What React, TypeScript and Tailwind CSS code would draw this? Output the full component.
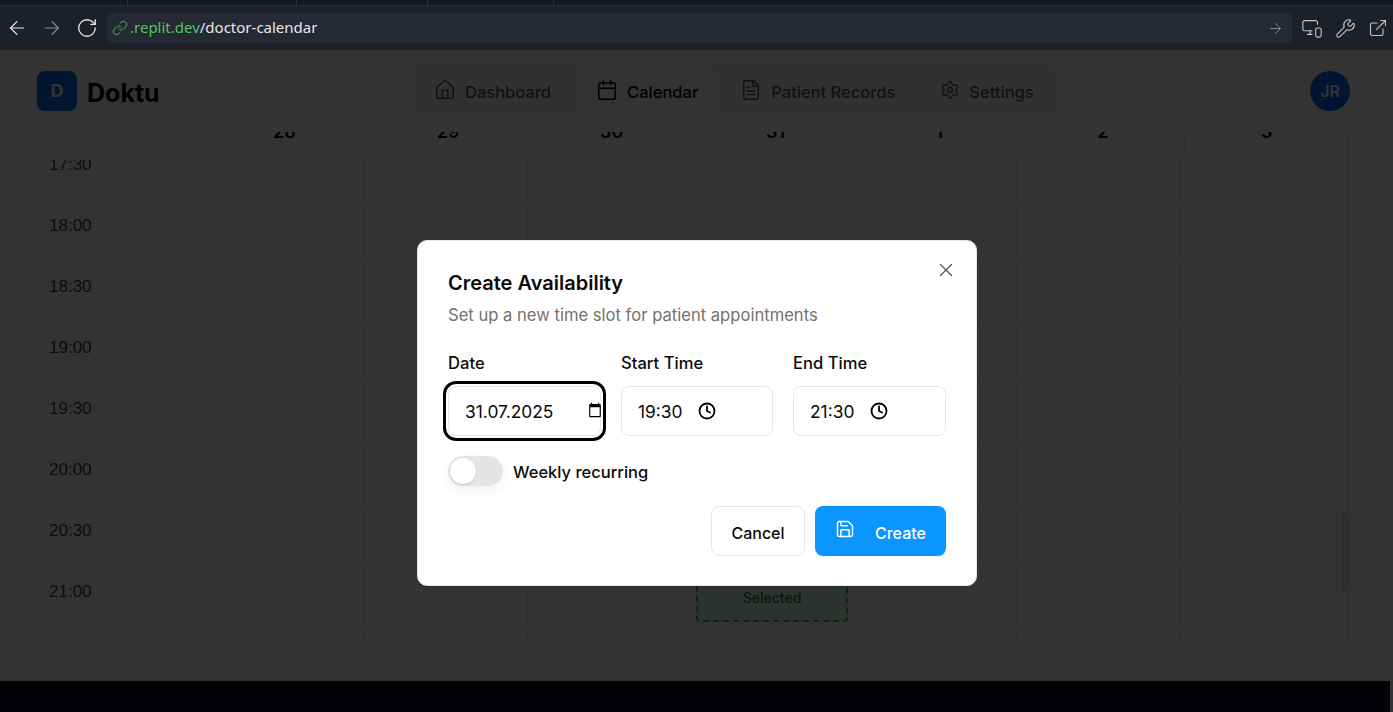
import React from "react";
import {
  ArrowLeft,
  ArrowRight,
  Calendar,
  Clock,
  ExternalLink,
  FileText,
  Home,
  Link as LinkIcon,
  MonitorSmartphone,
  RotateCw,
  Save,
  Settings,
  Wrench,
  X,
} from "lucide-react";

const days = ["28", "29", "30", "31", "1", "2", "3"];
const times = ["17:30", "18:00", "18:30", "19:00", "19:30", "20:00", "20:30", "21:00", "21:30"];

const navItems = [
  { label: "Dashboard", icon: Home, size: 22, className: "pl-[18px] pr-[20px] text-[#4b5563]" },
  { label: "Calendar", icon: Calendar, size: 22, className: "pl-[19px] pr-[20px] ml-[6px] mr-[5px] rounded-[10px] bg-white text-black" },
  { label: "Patient Records", icon: FileText, size: 22, className: "pl-[17px] pr-[20px] mr-[7px] text-[#4b5563]" },
  { label: "Settings", icon: Settings, size: 20, className: "pl-[18px] pr-[20px] text-[#4b5563]" },
];

const BrowserBar = () => (
  <div className="h-[50px] shrink-0 bg-[#1c202b] flex flex-col">
    <div className="h-[6px] bg-[#161722] border-b border-[#2c2f3e] flex pl-[127px]">
      <div className="w-[169px] border-l border-[#2c2f3e]" />
      <div className="w-[131px] border-l border-[#2c2f3e]" />
      <div className="w-[127px] border-l border-[#2c2f3e] border-r" />
    </div>
    <div className="flex items-center h-[30px] mt-[7px]">
      <div className="flex items-center w-[107px] pl-[6px] text-[#e8eaed]">
        <ArrowLeft size={22} strokeWidth={1.3} />
        <ArrowRight size={22} strokeWidth={1.3} className="ml-[13px] text-[#8b8e98]" />
        <RotateCw size={22} strokeWidth={1.4} className="ml-[13px]" />
      </div>
      <div className="w-[1185px] h-[30px] rounded-[4px] bg-[#252933] flex items-center pl-[5px] pr-[8px] font-['Noto_Sans',sans-serif] text-[15px] leading-[20px]">
        <LinkIcon size={16} strokeWidth={1.5} className="text-[#4fb35f] shrink-0" />
        <span className="ml-[2px] -mt-[2px] text-[#57c26a]">.replit.dev</span>
        <span className="-mt-[2px] text-[#e4e7ee]">/doctor-calendar</span>
        <ArrowRight size={17} strokeWidth={1.2} className="ml-auto text-[#9a9da6]" />
      </div>
      <div className="flex items-center pl-[9px] gap-[12px] text-[#c4c6cc]">
        <MonitorSmartphone size={22} strokeWidth={1.2} />
        <Wrench size={21} strokeWidth={1.2} />
        <ExternalLink size={20} strokeWidth={1.3} />
      </div>
    </div>
  </div>
);

const TopNav = () => (
  <div className="h-[82px] flex items-center pl-[37px] pr-[43px] bg-white">
    <div className="w-10 h-10 rounded-[8px] bg-[#0566f0] text-white font-bold text-lg flex items-center justify-center">
      D
    </div>
    <div className="ml-[10px] w-[72px] pt-[6px] text-[25px] font-bold text-black">Doktu</div>
    <div className="ml-[251px] w-[648px] h-[54px] rounded-[12px] bg-[#f3f4f6] flex items-center pl-[6px] text-[16.5px] font-medium">
      {navItems.map((item) => {
        const Icon = item.icon;
        return (
          <div key={item.label} className={`h-[46px] flex items-center gap-[9px] whitespace-nowrap ${item.className}`}>
            <Icon size={item.size} strokeWidth={1.7} className="shrink-0 -mt-[2px]" />
            <span className="pt-[3px]">{item.label}</span>
          </div>
        );
      })}
    </div>
    <div className="ml-auto w-10 h-10 rounded-full bg-[#0566f0] text-white font-semibold flex items-center justify-center">
      JR
    </div>
  </div>
);

const CalendarGrid = () => (
  <div className="ml-[37px] w-[1312px] h-[509px] overflow-hidden relative border-r border-b border-[#e5e7eb]">
    <div className="grid grid-cols-[165px_repeat(7,1fr)] h-[28px] border-b border-[#e5e7eb] overflow-hidden">
      <div className="border-l border-[#e5e7eb]" />
      {days.map((d) => (
        <div key={d} className="border-l border-[#e5e7eb] text-center text-lg font-semibold text-black leading-[18px] -mt-[9px]">
          {d}
        </div>
      ))}
    </div>
    <div className="h-[480px] overflow-hidden w-[1305px]">
      <div className="-mt-[20px]">
        {times.map((t) => (
          <div key={t} className="grid grid-cols-[164px_repeat(7,163px)] h-[61px] border-b border-[#e5e7eb]">
            <div className="pl-[11px] pt-[12px] text-[17px] text-[#374151] font-['Liberation_Sans',sans-serif] border-l border-[#e5e7eb]">
              {t}
            </div>
            {days.map((d) => (
              <div key={d} className="border-l border-[#e5e7eb] p-[5px]">
                {t === "21:00" && d === "31" && (
                  <div className="h-[50px] pt-[2px] rounded-[4px] border-2 border-dashed border-[#22c55e] bg-[#dcfce7] text-sm font-medium text-[#15803d] flex items-center justify-center">
                    Selected
                  </div>
                )}
              </div>
            ))}
          </div>
        ))}
      </div>
    </div>
    <div className="absolute right-0 top-[381px] h-[79px] w-[7px] rounded bg-[#e0e0e0]" />
  </div>
);

const Field = ({ label, children, focused }: { label: string; children: React.ReactNode; focused?: boolean }) => (
  <div className="flex flex-col">
    <div className="text-[16.6px] font-medium text-[#0c0a09] leading-[24px] mb-[11px]">{label}</div>
    <div
      className={
        focused
          ? "h-[50px] rounded-[8px] border border-[#e7e5e4] bg-white flex items-center pl-[16px] text-[17.4px] text-[#0c0a09] outline-[3px] outline-offset-[2px] outline-black"
          : "h-[50px] rounded-[8px] border border-[#e7e5e4] bg-white flex items-center pl-[16px] text-[17.4px] text-[#0c0a09]"
      }
    >
      {children}
    </div>
  </div>
);

const Dialog = () => (
  <div className="absolute left-[417px] top-[240px] w-[560px] h-[346px] rounded-[10px] border border-[#e7e5e4] bg-white pt-[28px] px-[30px]">
    <X size={22} strokeWidth={1.4} className="absolute right-[19px] top-[18px] text-[#57534e]" />
    <div className="text-[20px] font-semibold leading-[28px] text-[#0c0a09]">Create Availability</div>
    <div className="text-[16.6px] leading-[24px] mt-[6px] text-[#78716c]">Set up a new time slot for patient appointments</div>
    <div className="grid grid-cols-[153px_152px_153px] gap-x-[20px] mt-[24px]">
      <Field label="Date" focused>
        <span className="pt-[3px]">31.07.2025</span>
        <svg
          width="14"
          height="16"
          viewBox="0 0 24 24"
          preserveAspectRatio="none"
          fill="currentColor"
          className="ml-auto -mr-[2px] -mt-[2px] text-black"
        >
          <path d="M20 3h-1V1h-2v2H7V1H5v2H4c-1.1 0-2 .9-2 2v16c0 1.1.9 2 2 2h16c1.1 0 2-.9 2-2V5c0-1.1-.9-2-2-2zm0 18H4V8h16v13z" />
        </svg>
      </Field>
      <Field label="Start Time">
        <span className="pt-[3px]">19:30</span>
        <Clock size={18} strokeWidth={2.4} className="ml-[15px] text-black" />
      </Field>
      <Field label="End Time">
        <span className="pt-[3px]">21:30</span>
        <Clock size={18} strokeWidth={2.4} className="ml-[16px] text-black" />
      </Field>
    </div>
    <div className="flex items-center mt-[20px] gap-[10px]">
      <div className="w-[55px] h-[30px] rounded-full bg-[#e7e5e4] p-[2px] shadow-[0_4px_12px_rgba(0,0,0,0.06)]">
        <div className="w-[26px] h-[26px] rounded-full bg-white shadow-sm" />
      </div>
      <div className="pt-[2px] text-[16.5px] font-medium text-[#0c0a09]">Weekly recurring</div>
    </div>
    <div className="flex justify-end gap-[10px] mt-[20px] text-base font-medium">
      <div className="w-[94px] h-[50px] pt-[3px] rounded-[8px] border border-[#e7e5e4] bg-white text-[#0c0a09] flex items-center justify-center">
        Cancel
      </div>
      <div className="w-[131px] h-[50px] rounded-[8px] bg-[#0a95ff] text-white flex items-center pl-[20px] gap-[20px]">
        <Save size={20} strokeWidth={1.8} className="-mt-[4px]" />
        <span className="pt-[3px]">Create</span>
      </div>
    </div>
  </div>
);

export default function App() {
  return (
    <div className="relative w-[1393px] h-[712px] overflow-hidden flex flex-col bg-white font-['Inter',sans-serif]">
      <BrowserBar />
      <div className="relative h-[631px] bg-white">
        <TopNav />
        <CalendarGrid />
        <div className="absolute inset-0 bg-black/80" />
      </div>
      <div className="h-[31px] bg-[#333333] pr-[3px]">
        <div className="h-full bg-[#020308]" />
      </div>
      <Dialog />
    </div>
  );
}
